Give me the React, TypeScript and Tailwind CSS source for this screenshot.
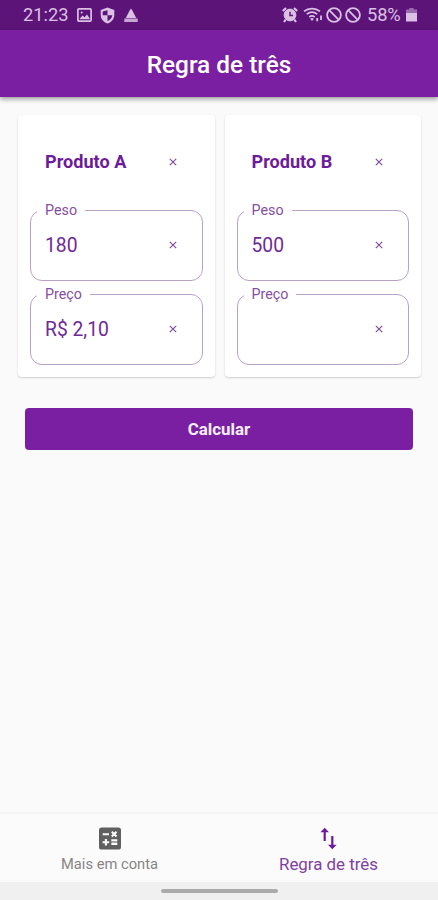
import React from "react";

function ClearIcon() {
  return (
    <svg width="8" height="8" viewBox="0 0 8 8" className="shrink-0" stroke="#7d4a9e" strokeWidth="1.15">
      <path d="M0.8 0.8 7.2 7.2M7.2 0.8 0.8 7.2" />
    </svg>
  );
}

function Field({ label, value }: { label: string; value: string }) {
  return (
    <fieldset className="h-[79px] min-w-0 rounded-[12px] border border-[#b9a0c6] pl-[6px] pr-[25px]">
      <legend className="h-4 px-[8px] text-[14.3px] leading-4 text-[#85509f]">{label}</legend>
      <div className="flex h-[54px] items-center justify-between pl-[8px]">
        <span className="pt-[2px] text-[19.3px] leading-6 text-[#6f2a96]">{value}</span>
        <ClearIcon />
      </div>
    </fieldset>
  );
}

function ProductCard({ name, weight, price }: { name: string; weight: string; price: string }) {
  return (
    <section className="h-[262px] flex-1 rounded-[4px] bg-white px-[12px] shadow-[0_1px_2px_rgba(0,0,0,0.18)]">
      <div className="flex h-[87px] items-center justify-between pl-[15px] pr-[26px] pt-[7px]">
        <h2 className="text-[18.1px] font-bold leading-6 text-[#6d1b9a]">{name}</h2>
        <ClearIcon />
      </div>
      <div className="flex flex-col gap-[5px]">
        <Field label="Peso" value={weight} />
        <Field label="Preço" value={price} />
      </div>
    </section>
  );
}

function StatusBar() {
  return (
    <div className="flex h-[30px] items-center justify-between bg-[#5c1478] pl-[23px] pr-[21px] text-[#d9c0e4]">
      <div className="flex items-center">
        <span className="w-[45px] whitespace-nowrap text-[18.3px] leading-6">21:23</span>
        <svg className="ml-[9px]" width="15" height="14" viewBox="0 0 15 14" fill="none" stroke="currentColor">
          <rect x="0.9" y="0.9" width="13.2" height="12.2" rx="1" strokeWidth="1.7" />
          <path d="M2.5 11 5.5 7.5 7.5 9.2 10 6.5 12.7 10.5V11.3H2.5Z" fill="currentColor" stroke="none" />
          <circle cx="4.7" cy="4.6" r="1" fill="currentColor" stroke="none" />
        </svg>
        <svg className="ml-[8px]" width="15" height="17" viewBox="0 0 15 17">
          <path d="M7.5 0.6 14.3 3V8C14.3 12 11.4 15.3 7.5 16.5 3.6 15.3 0.7 12 0.7 8V3Z" fill="currentColor" />
          <path d="M7.5 3.2V8.2H2.7V4.5ZM7.5 8.2H12.3C12 10.9 10 13.1 7.5 14.1Z" fill="#5c1478" />
        </svg>
        <svg className="ml-[9px]" width="14" height="15" viewBox="0 0 14 15" fill="currentColor">
          <path d="M7 0.5 8.5 2.7 12.2 10H1.8L5.5 2.7Z" />
          <path d="M0.3 10.5H13.7V14H0.3Z" opacity="0.85" />
        </svg>
      </div>
      <div className="flex items-center">
        <svg width="16" height="16" viewBox="0 0 16 16" fill="none" stroke="currentColor">
          <circle cx="8" cy="8" r="5.9" fill="currentColor" strokeWidth="1" />
          <path d="M0.8 4 4 1M15.2 4 12 1M3.7 12.5 2 15M12.3 12.5 14 15" strokeWidth="2.2" />
          <path d="M8 4.8V8.5H11" stroke="#5c1478" strokeWidth="1.4" />
        </svg>
        <svg className="ml-[5px]" width="20" height="16" viewBox="0 0 20 16" fill="none" stroke="currentColor">
          <path d="M1 4.3C5.4 0.7 12.6 0.7 17 4.3M3.7 7.2C7 4.6 11 4.6 14.3 7.2M6.3 10C8 8.7 10 8.7 11.7 10" strokeWidth="1.7" />
          <path d="M9 14 7.2 11.8Q9 10.4 10.8 11.8Z" fill="currentColor" stroke="none" />
          <path d="M14.2 11V14.2M18 8.5V13" strokeWidth="1.8" />
        </svg>
        <svg className="ml-[3px]" width="16" height="16" viewBox="0 0 16 16" fill="none" stroke="currentColor" strokeWidth="1.8">
          <circle cx="8" cy="8" r="6.9" />
          <path d="M3.2 3.2 12.8 12.8" />
        </svg>
        <svg className="ml-[3px]" width="16" height="16" viewBox="0 0 16 16" fill="none" stroke="currentColor" strokeWidth="1.8">
          <circle cx="8" cy="8" r="6.9" />
          <path d="M3.2 3.2 12.8 12.8" />
        </svg>
        <span className="ml-[6px] w-[35px] whitespace-nowrap text-[18.3px] leading-6 tracking-[-0.1px]">58%</span>
        <svg className="ml-[4px]" width="11" height="14" viewBox="0 0 11 14" fill="currentColor">
          <path d="M3.3 0H7.7V1.5H11V5H0V1.5H3.3Z" opacity="0.5" />
          <path d="M0 5H11V13.5H0Z" />
        </svg>
      </div>
    </div>
  );
}

function BottomNav() {
  return (
    <nav className="flex h-[70px] border-t-2 border-[#f4f4f4] bg-[#fbfbfb]">
      <div className="flex flex-1 flex-col items-center pt-[13px]">
        <svg width="22" height="23" viewBox="0 0 22 23">
          <rect x="0" y="0.5" width="22" height="22" rx="2.6" fill="#606060" />
          <path d="M3.7 7.3H10M12.8 4.8 17.5 9.5M17.5 4.8 12.8 9.5M3.6 15.2H10.2M6.9 11.9V18.5" stroke="#fbfbfb" strokeWidth="2.1" />
          <path d="M12.3 13.3H18.3M12.3 16.9H18.3" stroke="#fbfbfb" strokeWidth="2" />
          <path d="M12.3 15.1H18.3" stroke="#b0b0b0" strokeWidth="1.6" />
        </svg>
        <span className="mt-[4px] whitespace-nowrap text-[14.7px] leading-5 text-[#858585]">Mais em conta</span>
      </div>
      <div className="flex flex-1 flex-col items-center pt-[13px]">
        <svg width="17" height="23" viewBox="0 0 17 23" fill="none" stroke="#6d1b9a" strokeWidth="2.2">
          <path d="M4.7 14V3M12.3 9V20" />
          <path d="M4.7 0.8 9 5.2H0.4ZM12.3 22.2 8 17.8H16.6Z" fill="#6d1b9a" stroke="none" />
        </svg>
        <span className="mt-[4px] whitespace-nowrap text-[16.9px] leading-5 text-[#8040a0]">Regra de três</span>
      </div>
    </nav>
  );
}

export default function App() {
  return (
    <div className="flex h-[900px] w-[438px] flex-col overflow-hidden bg-[#fafafa] font-['Roboto',sans-serif]">
      <StatusBar />
      <header className="relative flex h-[67px] items-center justify-center bg-[#7b1fa2] pt-[2px] shadow-[0_2px_5px_rgba(0,0,0,0.4)]">
        <h1 className="text-[24.4px] font-medium leading-8 text-white">Regra de três</h1>
      </header>
      <main className="flex-1 pt-[18px]">
        <div className="flex gap-[10px] pl-[18px] pr-[17px]">
          <ProductCard name="Produto A" weight="180" price="R$ 2,10" />
          <ProductCard name="Produto B" weight="500" price="" />
        </div>
        <button className="ml-[25px] mt-[31px] block h-[42px] w-[388px] rounded-[4px] bg-[#7b1fa2] pt-[2px] text-[16.9px] font-bold text-[#f8effb]">
          Calcular
        </button>
      </main>
      <BottomNav />
      <div className="flex h-[18px] justify-center bg-[#f0f0f0] pt-[7px]">
        <div className="h-[4px] w-[117px] rounded-full bg-[#ababab]" />
      </div>
    </div>
  );
}
